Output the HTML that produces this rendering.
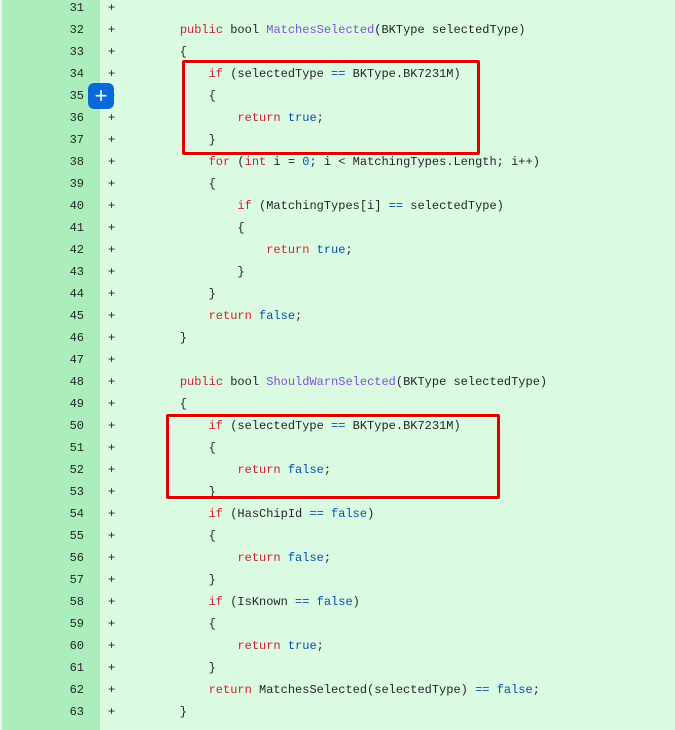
<!DOCTYPE html>
<html><head><style>
body{margin:0;width:675px;height:730px;overflow:hidden;background:#dafbe1;position:relative;font-family:"Liberation Mono",monospace;font-size:12px}
.gut{position:absolute;left:2px;top:0;width:98px;height:730px;background:#aceebb}
.lb{position:absolute;left:0;top:0;width:2px;height:730px;background:#e8f5ea}
.row{position:absolute;left:0;height:22px;line-height:22px;white-space:pre;color:#1f2328}
.n{position:absolute;left:30px;width:54px;text-align:right;color:#1f2328}
.p{position:absolute;left:108px}
.c{position:absolute;left:151px}
.k{color:#cf222e}.b{color:#0550ae}.m{color:#8250df}
.box{position:absolute;border:3px solid #e00000;border-radius:2px}
.btn{position:absolute;left:88px;top:83px;width:26px;height:26px;background:#0969da;border-radius:6px;color:#fff;font:22px/26px "Liberation Sans",sans-serif;text-align:center}
</style></head><body>
<div class="gut"></div><div class="lb"></div>
<div id="rows"></div>
<script>
var L=["","    <span class=k>public</span> bool <span class=m>MatchesSelected</span>(BKType selectedType)","    {","        <span class=k>if</span> (selectedType <span class=b>==</span> BKType.BK7231M)","        {","            <span class=k>return</span> <span class=b>true</span>;","        }","        <span class=k>for</span> (<span class=k>int</span> i = <span class=b>0</span>; i &lt; MatchingTypes.Length; i++)","        {","            <span class=k>if</span> (MatchingTypes[i] <span class=b>==</span> selectedType)","            {","                <span class=k>return</span> <span class=b>true</span>;","            }","        }","        <span class=k>return</span> <span class=b>false</span>;","    }","","    <span class=k>public</span> bool <span class=m>ShouldWarnSelected</span>(BKType selectedType)","    {","        <span class=k>if</span> (selectedType <span class=b>==</span> BKType.BK7231M)","        {","            <span class=k>return</span> <span class=b>false</span>;","        }","        <span class=k>if</span> (HasChipId <span class=b>==</span> <span class=b>false</span>)","        {","            <span class=k>return</span> <span class=b>false</span>;","        }","        <span class=k>if</span> (IsKnown <span class=b>==</span> <span class=b>false</span>)","        {","            <span class=k>return</span> <span class=b>true</span>;","        }","        <span class=k>return</span> MatchesSelected(selectedType) <span class=b>==</span> <span class=b>false</span>;","    }"];
var h="";for(var i=0;i<L.length;i++){h+='<div class="row" style="top:'+(-3+i*22)+'px;width:675px"><span class="n">'+(31+i)+'</span><span class="p">+</span><span class="c">'+L[i]+'</span></div>';}
document.getElementById("rows").innerHTML=h;
</script>
<div class="box" style="left:182px;top:60px;width:292px;height:89px"></div>
<div class="box" style="left:166px;top:414px;width:328px;height:79px"></div>
<div class="btn">+</div>
</body></html>
